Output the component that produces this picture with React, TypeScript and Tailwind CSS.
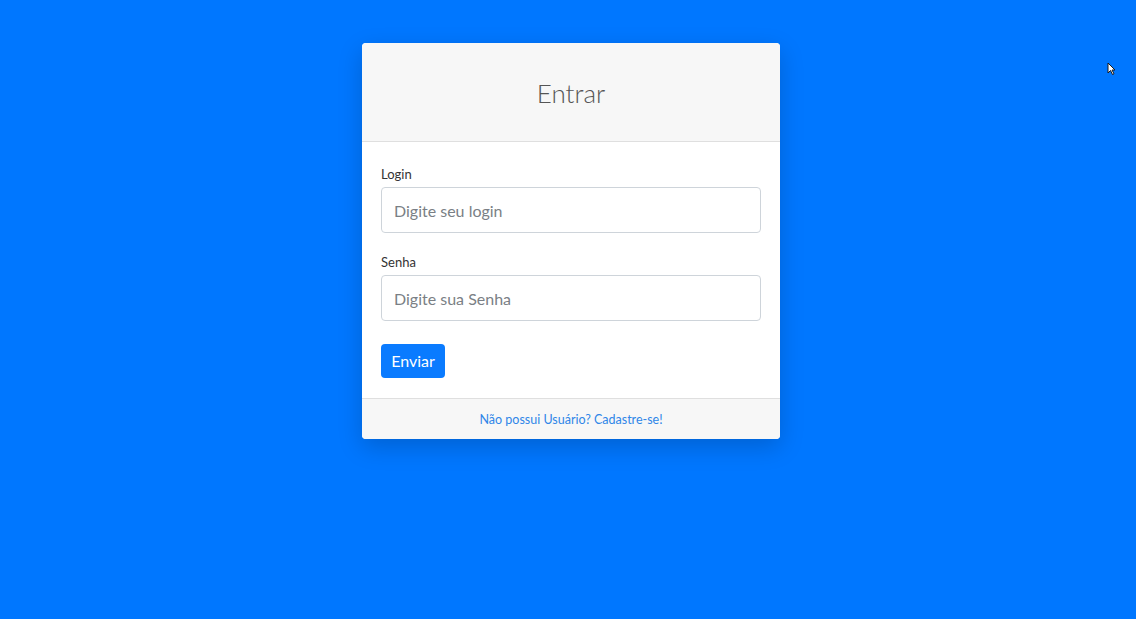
const font = { fontFamily: 'Lato, "Noto Sans", "Open Sans", sans-serif' }

const Field = (prop: { label: string, placeholder: string, type?: string }) => {
    return (
        <div className="flex flex-col">
            <label className="text-[13px] leading-[18px] text-[#333] mb-[4px]">{prop.label}</label>
            <input
                type={prop.type ?? 'text'}
                placeholder={prop.placeholder}
                className="h-[46px] w-full rounded-[4px] border border-[#ced4da] bg-white px-[12px] text-[16px] text-[#495057] placeholder:text-[#7a7f85] outline-none"
            />
        </div>
    )
}

export default function App() {
    return (
        <div className="relative min-h-[619px] w-full bg-[#0077ff] pt-[43px] pl-[6px] flex justify-center" style={font}>
            <div className="w-[418px] h-fit rounded-[4px] bg-white overflow-hidden shadow-[0_8px_24px_rgba(0,0,0,0.18)]">
                <div className="h-[99px] bg-[#f7f7f7] border-b border-[#dfdfdf] flex items-center justify-center">
                    <h1 className="text-[26px] font-light text-[#555] pt-[2px]">Entrar</h1>
                </div>
                <div className="px-[19px] pt-[23px] pb-[20px] flex flex-col">
                    <Field label="Login" placeholder="Digite seu login" />
                    <div className="h-[20px]" />
                    <Field label="Senha" placeholder="Digite sua Senha" type="password" />
                    <div className="h-[23px]" />
                    <button className="w-[64px] h-[34px] rounded-[4px] bg-[#0a7bff] text-white text-[16px]">Enviar</button>
                </div>
                <div className="h-[41px] pt-[3px] bg-[#f7f7f7] border-t border-[#dfdfdf] flex items-center justify-center">
                    <a href="#" className="text-[12.5px] text-[#2f86e8]">Não possui Usuário? Cadastre-se!</a>
                </div>
            </div>
            {/* mouse pointer */}
            <svg className="absolute left-[1107px] top-[62px]" width="9" height="13" viewBox="0 0 9 13">
                <path d="M1 1 L1 11 L3.5 8.5 L5.5 12.5 L7 11.8 L5 8 L8 8 Z" fill="white" stroke="#1a1a1a" strokeWidth="1" />
            </svg>
        </div>
    )
}
